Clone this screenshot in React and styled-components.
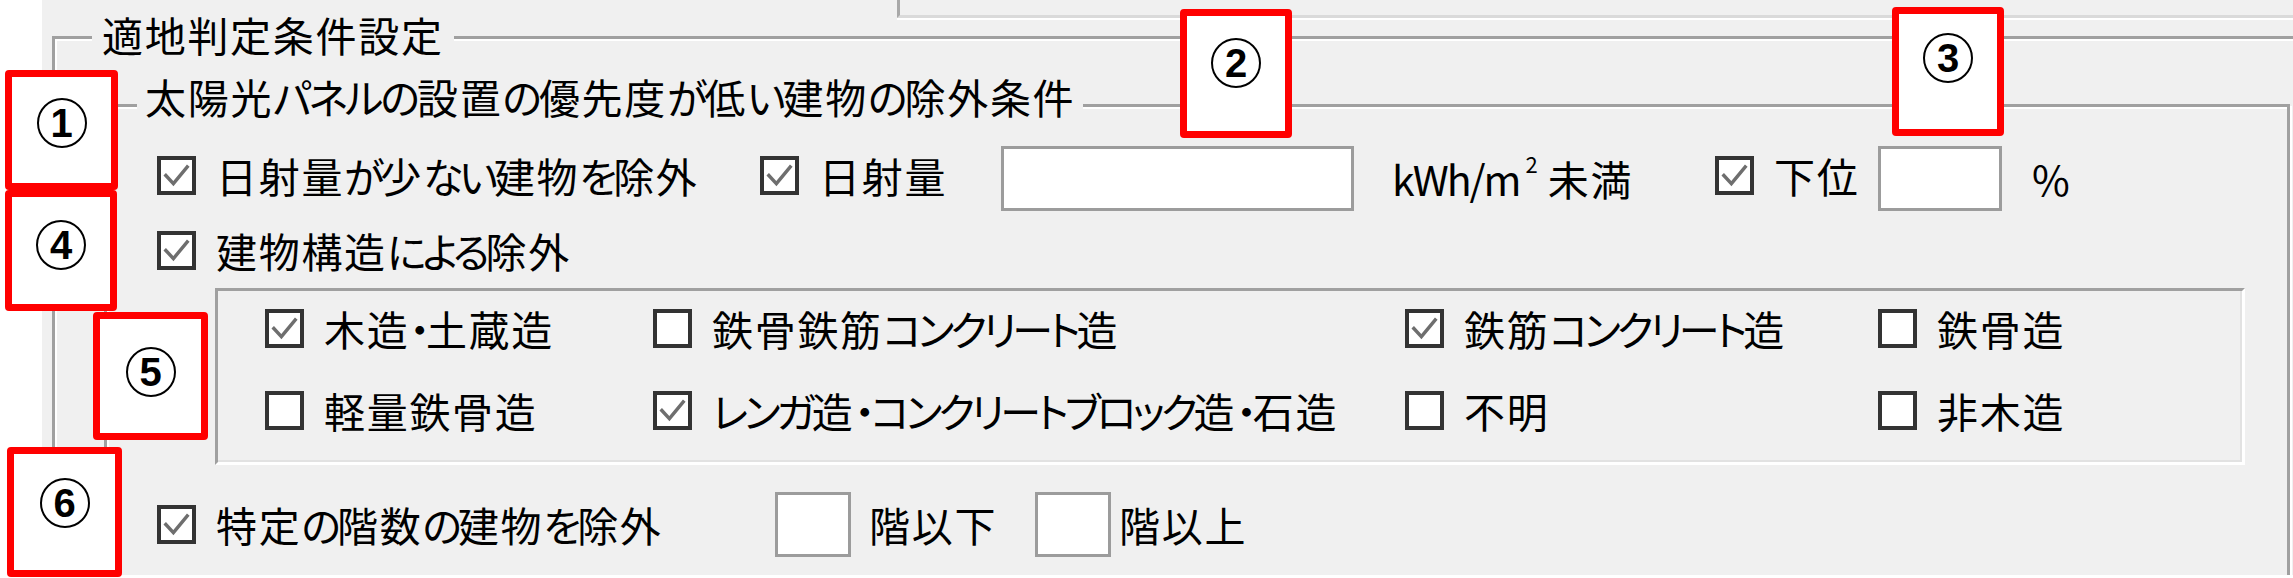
import React from "react";
import styled, { createGlobalStyle } from "styled-components";

const GlobalStyle = createGlobalStyle`
  html, body { margin: 0; padding: 0; background: #fff; }
  body { font-family: "Noto Sans CJK JP", "Noto Sans", sans-serif; }
  * { box-sizing: border-box; }
`;

const Page = styled.div`
  position: relative;
  display: flex;
  width: 2293px;
  height: 578px;
  overflow: hidden;
  background: #fff;
`;

const Gutter = styled.div`
  width: 42px;
  flex: none;
  background: #fff;
`;

const Surface = styled.div`
  flex: 1;
  height: 575px;
  background: #f0f0f0;
  overflow: hidden;
`;

const TopPanelEdge = styled.div`
  margin-left: 855px;
  height: 18px;
  border-left: 3px solid #a8a8a8;
  border-bottom: 3px solid #dadada;
  box-shadow: 0 2px 0 #fff;
`;

const GroupBox = styled.div`
  position: relative;
  margin-left: ${(p) => p.$left}px;
  margin-top: ${(p) => p.$top}px;
  width: ${(p) => p.$width}px;
  height: ${(p) => p.$height}px;
  padding: ${(p) => p.$pad};
  border: 3px solid #a0a0a0;
  box-shadow: inset 2px 2px 0 #fff, 2px 2px 0 #fff;
`;

const Caption = styled.div`
  position: absolute;
  top: ${(p) => p.$top}px;
  left: ${(p) => p.$left}px;
  padding: 0 ${(p) => p.$padX}px;
  background: #f0f0f0;
  height: 40px;
  line-height: 40px;
  font-size: 41px;
  letter-spacing: 1.7px;
  font-feature-settings: "palt";
  color: #000;
  white-space: nowrap;
`;

const Label = styled.span`
  font-size: 41px;
  line-height: 40px;
  letter-spacing: 1.7px;
  font-feature-settings: "palt";
  color: #000;
  white-space: nowrap;
  padding-left: ${(p) => p.$pad || 0}px;
`;

const Kana = styled.span`
  letter-spacing: ${(p) => p.$ls}px;
`;

const Unit = styled.span`
  display: flex;
  align-items: flex-start;
  padding-left: 38px;
  font-size: 41px;
  line-height: 40px;
  color: #000;
  white-space: nowrap;
`;

const UnitLatin = styled.span`
  letter-spacing: -2px;
`;

const Sup = styled.span`
  font-size: 22px;
  line-height: 22px;
  margin: -6px 10px 0 6px;
`;

const UnitKanji = styled.span`
  letter-spacing: 1.7px;
`;

const CheckItem = styled.label`
  display: flex;
  align-items: center;
  gap: 20px;
  margin-top: ${(p) => p.$shift || 0}px;
`;

const Box = styled.span`
  width: 39px;
  height: 39px;
  flex: none;
  border: 4px solid #333;
  background: #fff;
  display: grid;
  place-items: center;
`;

const TextBox = styled.span`
  display: block;
  width: ${(p) => p.$w}px;
  height: 65px;
  background: #fff;
  border: 3px solid #9c9c9c;
`;

const OptionsRow = styled.div`
  display: grid;
  grid-template-columns: ${(p) => p.$cols};
  align-items: center;
  height: ${(p) => p.$h}px;
  margin-top: ${(p) => p.$mt || 0}px;
`;

const StructureBox = styled.div`
  margin-left: 58px;
  margin-top: 18px;
  width: 2030px;
  height: 177px;
  border-top: 3px solid #a0a0a0;
  border-left: 3px solid #a0a0a0;
  border-right: 3px solid #fff;
  border-bottom: 3px solid #fff;
  box-shadow: inset -2px -2px 0 #e2e2e2;
  padding: 12px 0 0 47px;
  display: grid;
  grid-template-columns: 388px 752px 473px auto;
  grid-template-rows: 50px 50px;
  row-gap: 32px;
  align-items: center;
`;

const Callout = styled.div`
  position: absolute;
  left: ${(p) => p.$x}px;
  top: ${(p) => p.$y}px;
  width: ${(p) => p.$w}px;
  height: ${(p) => p.$h}px;
  border: 7px solid #ff0000;
  border-radius: 4px;
  background: #fff;
  display: flex;
  justify-content: center;
  align-items: flex-start;
  padding-top: ${(p) => p.$pt}px;
`;

const Circled = styled.span`
  width: 50px;
  height: 50px;
  border: 2px solid #000;
  border-radius: 50%;
  display: grid;
  place-items: center;
  font-family: "Liberation Sans", Arial, sans-serif;
  font-weight: 700;
  font-size: 40px;
  line-height: 1;
  color: #000;
`;

const KANA_RE = /([\u3040-\u30ff\u30fc\u30fb]+)/;

function JP({ text, ls = -4 }) {
  return text
    .split(KANA_RE)
    .filter(Boolean)
    .map((part, i) =>
      KANA_RE.test(part) ? (
        <Kana key={i} $ls={ls}>
          {part}
        </Kana>
      ) : (
        <React.Fragment key={i}>{part}</React.Fragment>
      )
    );
}

function Check({ checked, children, shift }) {
  return (
    <CheckItem $shift={shift}>
      <Box>
        {checked && (
          <svg width="31" height="31" viewBox="0 0 100 100">
            <path
              d="M12 46 L40 76 L88 18"
              fill="none"
              stroke="#6e6e6e"
              strokeWidth="11"
            />
          </svg>
        )}
      </Box>
      <Label>
        <JP text={children} />
      </Label>
    </CheckItem>
  );
}

const callouts = [
  { n: "1", x: 5, y: 70, w: 113, h: 120, pt: 21 },
  { n: "2", x: 1180, y: 9, w: 112, h: 129, pt: 22 },
  { n: "3", x: 1892, y: 7, w: 112, h: 129, pt: 19 },
  { n: "4", x: 5, y: 190, w: 112, h: 121, pt: 23 },
  { n: "5", x: 93, y: 312, w: 115, h: 128, pt: 28 },
  { n: "6", x: 7, y: 447, w: 115, h: 130, pt: 24 },
];

export default function App() {
  return (
    <>
      <GlobalStyle />
      <Page>
        <Gutter />
        <Surface>
          <TopPanelEdge />
          <GroupBox $left={10} $top={18} $width={2270} $height={620} $pad="0">
            <Caption $top={-25} $left={37} $padX={10}>
              適地判定条件設定
            </Caption>
            <GroupBox
              $left={49}
              $top={65}
              $width={2186}
              $height={560}
              $pad="38px 0 0 50px"
            >
              <Caption $top={-31} $left={30} $padX={8}>
                <JP text="太陽光パネルの設置の優先度が低い建物の除外条件" ls={-3} />
              </Caption>

              <OptionsRow
                $h={66}
                $cols="603px 241px 353px 361px 163px 124px auto"
              >
                <Check checked shift={-6}>日射量が少ない建物を除外</Check>
                <Check checked shift={-6}>日射量</Check>
                <TextBox $w={353} />
                <Unit>
                  <UnitLatin>kWh/m</UnitLatin>
                  <Sup>2</Sup>
                  <UnitKanji>未満</UnitKanji>
                </Unit>
                <Check checked shift={-6}>下位</Check>
                <TextBox $w={124} />
                <Label $pad={30}>%</Label>
              </OptionsRow>

              <OptionsRow $h={40} $mt={19} $cols="auto">
                <Check checked>建物構造による除外</Check>
              </OptionsRow>

              <StructureBox>
                <Check checked>木造・土蔵造</Check>
                <Check>鉄骨鉄筋コンクリート造</Check>
                <Check checked>鉄筋コンクリート造</Check>
                <Check>鉄骨造</Check>
                <Check>軽量鉄骨造</Check>
                <Check checked>レンガ造・コンクリートブロック造・石造</Check>
                <Check>不明</Check>
                <Check>非木造</Check>
              </StructureBox>

              <OptionsRow $h={66} $mt={26} $cols="618px 76px 184px 76px auto">
                <Check checked>特定の階数の建物を除外</Check>
                <TextBox $w={76} />
                <Label $pad={18}>階以下</Label>
                <TextBox $w={76} />
                <Label $pad={8}>階以上</Label>
              </OptionsRow>
            </GroupBox>
          </GroupBox>
        </Surface>

        {callouts.map((c) => (
          <Callout key={c.n} $x={c.x} $y={c.y} $w={c.w} $h={c.h} $pt={c.pt}>
            <Circled>{c.n}</Circled>
          </Callout>
        ))}
      </Page>
    </>
  );
}
